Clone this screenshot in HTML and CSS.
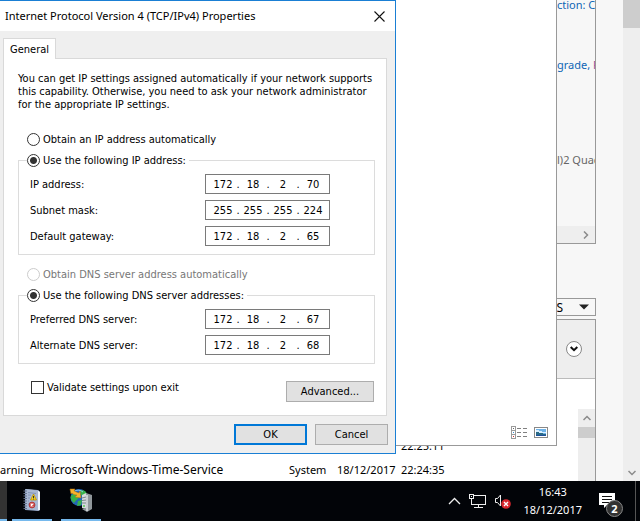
FILE: index.html
```html
<!DOCTYPE html>
<html lang="en">
<head>
<meta charset="utf-8">
<title>Internet Protocol Version 4 (TCP/IPv4) Properties</title>
<link rel="stylesheet" href="styles.css">
</head>
<body>
<main class="desktop">
  <section class="server" aria-label="Server Manager">
    <div class="server-content">
      <div class="panel summary">
        <div class="summary-values">
          <a href="#protection">ction: C</a>
          <a href="#feedback">grade, <span class="visited">P</span></a>
          <span class="plain">l)2 Quad</span>
        </div>
        <div class="hscroll">
          <svg width="6" height="8" viewBox="0 0 6 8"><path d="M1 0.5L4.5 4L1 7.5" fill="none" stroke="#8a8a8a" stroke-width="1.5"/></svg>
        </div>
      </div>
      <div class="tasks-row">
        <button class="tasks" type="button">S
          <svg width="10" height="6" viewBox="0 0 10 6"><path d="M0 0.5H10L5 5.5Z" fill="#222"/></svg>
        </button>
      </div>
      <div class="panel events">
        <div class="events-head">
          <button class="expand" type="button" aria-label="Expand">
            <svg width="8" height="6" viewBox="0 0 8 6"><path d="M0.7 1L4 4.2L7.3 1" fill="none" stroke="#111" stroke-width="2"/></svg>
          </button>
        </div>
        <div class="events-body">
          <table class="log">
            <tr><td></td><td></td><td></td><td class="date"></td><td class="time">22:25:11</td></tr>
            <tr><td>arning</td><td>Microsoft-Windows-Time-Service</td><td>System</td><td class="date">18/12/2017</td><td class="time">22:24:35</td></tr>
          </table>
          <div class="vscroll">
            <svg width="8" height="6" viewBox="0 0 8 6"><path d="M0.5 5L4 1.5L7.5 5" fill="none" stroke="#8a8a8a" stroke-width="1.5"/></svg>
            <div class="vthumb"></div>
          </div>
        </div>
      </div>
    </div>
    <div class="page-scroll">
      <div class="page-thumb"></div>
      <svg width="8" height="6" viewBox="0 0 8 6"><path d="M0.5 1L4 4.5L7.5 1" fill="none" stroke="#8a8a8a" stroke-width="1.5"/></svg>
    </div>
  </section>

  <section class="explorer" aria-label="Network Connections">
    <button class="view" type="button" aria-label="Details view">
      <svg width="16" height="13" viewBox="0 0 16 13" shape-rendering="crispEdges">
        <path d="M0.5 0.5H4.5V12.5H0.5ZM0.5 4.5H4.5M0.5 8.5H4.5" fill="none" stroke="#9a9a9a"/>
        <path d="M6 2.5H10M12 2.5H16M6 6.5H10M12 6.5H16M6 10.5H10M12 10.5H16" stroke="#808080"/>
        <path d="M2 2H3V3H2Z" fill="#666"/><path d="M2 6H3V7H2Z" fill="#3b8fd0"/><path d="M2 10H3V11H2Z" fill="#d03030"/>
      </svg>
    </button>
    <button class="view" type="button" aria-label="Large icons view">
      <svg width="14" height="11" viewBox="0 0 14 11" shape-rendering="crispEdges">
        <rect x="0.5" y="0.5" width="13" height="10" fill="#fff" stroke="#888"/>
        <rect x="2" y="2" width="10" height="7" fill="#6db2e8"/>
        <path d="M2 3H5V4H8V5H12V6H2Z" fill="#d8efff"/>
        <path d="M2 5H5V6H9V7H12V9H2Z" fill="#2b6a86"/><path d="M2 8H12V9H2Z" fill="#1c4f9c"/>
      </svg>
    </button>
  </section>

  <form class="dialog" aria-labelledby="dialog-title">
    <header class="titlebar">
      <h1 id="dialog-title">Internet Protocol Version 4 (TCP/IPv4) Properties</h1>
      <button class="close" type="button" aria-label="Close">
        <svg width="11" height="11" viewBox="0 0 11 11"><path d="M0.5 0.5L10.5 10.5M10.5 0.5L0.5 10.5" stroke="#111" stroke-width="1.1"/></svg>
      </button>
    </header>
    <div class="dialog-body">
      <button class="tab" type="button">General</button>
      <div class="page">
        <p class="intro">You can get IP settings assigned automatically if your network supports<br>this capability. Otherwise, you need to ask your network administrator<br>for the appropriate IP settings.</p>

        <label class="option"><input type="radio" name="ip">Obtain an IP address automatically</label>
        <fieldset class="group">
          <legend><label class="option"><input type="radio" name="ip" checked>Use the following IP address:</label></legend>
          <div class="field"><label for="ip1">IP address:</label>
            <div class="octets"><input id="ip1" value="172"><i>.</i><input aria-label="IP octet 2" value="18"><i>.</i><input aria-label="IP octet 3" value="2"><i>.</i><input aria-label="IP octet 4" value="70"></div></div>
          <div class="field"><label for="mask1">Subnet mask:</label>
            <div class="octets"><input id="mask1" value="255"><i>.</i><input aria-label="Mask octet 2" value="255"><i>.</i><input aria-label="Mask octet 3" value="255"><i>.</i><input aria-label="Mask octet 4" value="224"></div></div>
          <div class="field"><label for="gw1">Default gateway:</label>
            <div class="octets"><input id="gw1" value="172"><i>.</i><input aria-label="Gateway octet 2" value="18"><i>.</i><input aria-label="Gateway octet 3" value="2"><i>.</i><input aria-label="Gateway octet 4" value="65"></div></div>
        </fieldset>

        <label class="option disabled"><input type="radio" name="dns-auto" disabled>Obtain DNS server address automatically</label>
        <fieldset class="group">
          <legend><label class="option"><input type="radio" name="dns" checked>Use the following DNS server addresses:</label></legend>
          <div class="field"><label for="dns1">Preferred DNS server:</label>
            <div class="octets"><input id="dns1" value="172"><i>.</i><input aria-label="Preferred octet 2" value="18"><i>.</i><input aria-label="Preferred octet 3" value="2"><i>.</i><input aria-label="Preferred octet 4" value="67"></div></div>
          <div class="field"><label for="alt1">Alternate DNS server:</label>
            <div class="octets"><input id="alt1" value="172"><i>.</i><input aria-label="Alternate octet 2" value="18"><i>.</i><input aria-label="Alternate octet 3" value="2"><i>.</i><input aria-label="Alternate octet 4" value="68"></div></div>
        </fieldset>

        <div class="page-foot">
          <label class="validate"><input type="checkbox">Validate settings upon exit</label>
          <button class="btn advanced" type="button">Advanced...</button>
        </div>
      </div>
      <div class="actions">
        <button class="btn default" type="button">OK</button>
        <button class="btn" type="button">Cancel</button>
      </div>
    </div>
  </form>
</main>

<footer class="taskbar">
  <div class="apps">
    <button class="app edge" type="button" aria-label="Server Manager"></button>
    <button class="app" type="button" aria-label="Event Viewer">
      <svg width="18" height="24" viewBox="0 0 18 24">
        <path d="M2 1L15 2L17 4V22L15 23L2 22Z" fill="#8fa3c4"/>
        <path d="M3 1L15 2.5V22.5L3 21Z" fill="#a9b8d3"/>
        <path d="M15 2.5L17 4V22L15 22.5Z" fill="#eef3fa"/>
        <path d="M5 4.5L13 5.5M5 7L8 7.2M5 10H7M5 13H6M5 16H6" stroke="#8194b6"/>
        <path d="M0.5 3H4M0.5 5.5H4M0.5 8H4M0.5 10.5H4M0.5 13H4M0.5 15.5H4M0.5 18H4M0.5 20.5H4" stroke="#66738c"/>
        <path d="M10.500 6L13.500 12H7.500Z" fill="#f5d21f" stroke="#b88f08" stroke-width="0.8"/>
        <path d="M10.500 8V10M10.500 10.600V11.400" stroke="#333"/>
        <circle cx="9" cy="17" r="3" fill="#cf4444" stroke="#9d2929" stroke-width="0.6"/>
        <path d="M7.700 15.700L10.300 18.300M10.300 15.700L7.700 18.300" stroke="#fff" stroke-width="1.200"/>
      </svg>
    </button>
    <button class="app" type="button" aria-label="Network Connections">
      <svg width="24" height="24" viewBox="0 0 24 24">
        <circle cx="10" cy="9.500" r="8.500" fill="#2367b8"/>
        <path d="M2 8C4 5 8 6 10 8C10 11 7 12 5 15C3 13 1 11 2 8ZM11 3C14 1 17 3 18 6L15 9L12 7ZM9 13L13 12L12 17L8 18Z" fill="#38b24a"/>
        <path d="M3 5C6 2 10 1 14 4" fill="none" stroke="#9bdcff" stroke-width="0.8"/>
        <path d="M1 1L6 1L5 3C8 4 9 5 10 5L11 3L12 10L6 9L8 7C5 7 4 6 3 5L2 6Z" fill="#f7b22c" stroke="#b9730c" stroke-width="0.5"/>
        <path d="M13 7L17 5V21L13 20Z" fill="#d6dadc"/><path d="M17 5L23 7V21L18 24L13 21L17 20Z" fill="#90979b"/>
        <path d="M13 10L17 9M13 12.500L17 12M13 15H17" stroke="#7b868c"/><path d="M18 7V23" stroke="#dce1e3" stroke-width="1.500"/>
        <circle cx="15" cy="18" r="1" fill="#54c454"/>
      </svg>
    </button>
  </div>
  <div class="tray">
    <button class="tray-btn" type="button" aria-label="Show hidden icons">
      <svg width="13" height="8" viewBox="0 0 13 8"><path d="M1 7L6.500 1.500L12 7" fill="none" stroke="#eee" stroke-width="1.300"/></svg>
    </button>
    <button class="tray-btn" type="button" aria-label="Network">
      <svg width="17" height="14" viewBox="0 0 17 14" shape-rendering="crispEdges"><path d="M5 1.500H16.500V10.500H2.500V5M9.500 10.500V13M5 13.500H14M0.500 0.500H4.500V4.500H0.500Z" fill="none" stroke="#eee"/><path d="M2 2H3V3H2Z" fill="#eee"/></svg>
    </button>
    <button class="tray-btn" type="button" aria-label="Volume">
      <svg width="18" height="16" viewBox="0 0 18 16"><path d="M1.500 5.500H3.500L6.500 2V13L3.500 9.500H1.500Z" fill="none" stroke="#eee"/><circle cx="12" cy="11" r="4.800" fill="#d9262d"/><path d="M10 9L14 13M14 9L10 13" stroke="#fff" stroke-width="1.400"/></svg>
    </button>
    <div class="clock"><time>16:43</time><span>18/12/2017</span></div>
    <button class="action" type="button" aria-label="Notifications">
      <svg width="16" height="16" viewBox="0 0 16 16"><path d="M0 0H16V12H8L5 15V12H0Z" fill="#fff"/><path d="M3 3.500H13M3 6.500H13M3 9.500H10" stroke="#111"/></svg>
      <span class="badge">2</span>
    </button>
    <div class="show-desktop"></div>
  </div>
</footer>
</body>
</html>
```
FILE: styles.css
```css
* { box-sizing: border-box; }

body {
  margin: 0;
  height: 100vh;
  display: flex;
  flex-direction: column;
  overflow: hidden;
  font: 11px/13px "DejaVu Sans Condensed", "Liberation Sans", sans-serif;
  color: #000;
}

button, input { font: inherit; color: inherit; margin: 0; padding: 0; }
button { border: 0; background: none; }
svg { display: block; flex: none; }

.desktop { flex: 1; min-height: 0; position: relative; overflow: hidden; }

/* Server Manager window */
.server {
  position: absolute;
  inset: 0;
  display: flex;
  background: #f7f7f7;
  font-family: "Noto Sans", sans-serif;
  font-size: 12px;
}
.server-content { flex: 1; min-width: 0; margin-right: 27px; display: flex; flex-direction: column; }
.panel { border: 1px solid #999; border-left: 0; }
.summary { flex: none; height: 244px; border-top: 0; display: flex; flex-direction: column; align-items: flex-end; }
.summary-values {
  flex: 1;
  width: 38px;
  overflow: hidden;
  white-space: nowrap;
  display: flex;
  flex-direction: column;
  font-size: 11px;
}
.summary-values a { color: #0f66b5; text-decoration: none; height: 60px; line-height: 10px; flex: none; }
.summary-values .visited { color: #95519b; }
.summary-values .plain { color: #666; line-height: 80px; }
.hscroll { width: 100%; height: 17px; background: #eee; display: flex; align-items: center; justify-content: flex-end; padding-right: 6px; }
.tasks-row { display: flex; justify-content: flex-end; padding: 54px 0 3px; }
.tasks {
  width: 100px;
  height: 18px;
  border: 1px solid #999;
  display: flex;
  align-items: center;
  justify-content: flex-end;
  gap: 16px;
  padding-right: 6px;
}
.events { flex: 1; min-height: 0; border-bottom: 0; display: flex; flex-direction: column; }
.events-head { flex: none; height: 59px; background: #eee; border-bottom: 1px solid #bbb; display: flex; align-items: center; justify-content: flex-end; padding-right: 13px; }
.expand { width: 16px; height: 16px; border: 1px solid #888; border-radius: 50%; background: #fff; display: flex; align-items: center; justify-content: center; }
.events-body { flex: 1; min-height: 0; background: #fff; display: flex; align-items: flex-end; justify-content: space-between; }
.log { border-collapse: collapse; white-space: nowrap; font-size: 11px; }
.log td { height: 24px; padding: 0; }
.log td:nth-child(1) { min-width: 40px; }
.log td:nth-child(2) { min-width: 249px; font-size: 12px; }
.log td:nth-child(3) { min-width: 48px; }
.log .date { min-width: 64px; }
.vscroll { width: 17px; height: 72px; background: #eee; display: flex; flex-direction: column; align-items: center; gap: 6px; padding-top: 6px; }
.vthumb { width: 17px; height: 11px; background: #cdcdcd; }
.page-scroll { width: 17px; background: #eee; display: flex; flex-direction: column; align-items: center; justify-content: space-between; padding-bottom: 5px; }
.page-thumb { width: 17px; height: 28px; background: #cdcdcd; }

/* Network Connections window */
.explorer {
  position: absolute;
  top: 0;
  left: 0;
  width: 557px;
  height: 446px;
  background: #fff;
  border: 1px solid #999;
  border-width: 0 1px 1px 0;
  display: flex;
  align-items: flex-end;
  justify-content: flex-end;
  gap: 7px;
  padding: 0 8px 6px;
}
.view { display: flex; align-items: center; height: 13px; }

/* Properties dialog */
.dialog {
  position: absolute;
  top: 0;
  left: 0;
  width: 396px;
  background: #efefef;
  border: 1px solid #1a7fd4;
  border-left: 0;
}
.titlebar { height: 30px; background: #fff; display: flex; align-items: center; justify-content: space-between; padding: 0 10px 0 5px; }
.titlebar h1 { margin: 0; font: 11px/16px "Noto Sans", sans-serif; }
.dialog-body { padding: 7px 7px 8px 3px; }
.tab {
  position: relative;
  display: block;
  height: 21px;
  padding: 0 6px;
  margin-bottom: -1px;
  background: #fff;
  border: 1px solid #d9d9d9;
  border-bottom: 0;
}
.page { background: #fff; border: 1px solid #d9d9d9; margin-right: 1px; padding: 13px 11px 13px 14px; }
.intro { margin: 0 0 22px; white-space: nowrap; }
.option { display: flex; align-items: center; gap: 3px; height: 13px; }
.page > .option { margin-left: 9px; }
.disabled { color: #777; }
.option input {
  appearance: none;
  width: 13px;
  height: 13px;
  border: 1px solid #333;
  border-radius: 50%;
  background: #fff;
}
.option input:checked { background: radial-gradient(circle, #333 3px, #fff 4px); }
.option input:disabled { border-color: #ccc; }
.group { margin: 8px 0 13px; padding: 7px 44px 8px 11px; border: 1px solid #dcdcdc; min-width: 0; }
.group legend { margin-left: -3px; padding: 0 3px 0 0; }
.field { display: flex; align-items: center; justify-content: space-between; height: 20px; margin-bottom: 6px; }
.field:last-child { margin-bottom: 0; }
.octets { display: flex; align-items: center; width: 125px; height: 20px; border: 1px solid #7a7a7a; background: #fff; padding-left: 5px; }
.octets input { width: 24px; height: 16px; border: 0; background: none; text-align: center; outline: 0; }
.octets i { width: 6px; font-style: normal; text-align: center; }
.page-foot { display: flex; align-items: flex-start; justify-content: space-between; margin-top: 17px; padding: 0 1px 0 13px; }
.validate { display: flex; align-items: center; gap: 3px; height: 13px; }
.validate input { appearance: none; width: 13px; height: 13px; border: 1px solid #333; background: #fff; }
.btn { width: 73px; height: 21px; background: #e1e1e1; border: 1px solid #adadad; }
.advanced { width: 88px; }
.default { border: 2px solid #0078d7; }
.actions { display: flex; justify-content: flex-end; gap: 8px; padding-top: 8px; }

/* Taskbar */
.taskbar { flex: none; height: 40px; background: #020408; color: #fff; display: flex; justify-content: space-between; font: 11px/18px "Noto Sans", sans-serif; }
.apps { display: flex; gap: 9px; }
.app { width: 40px; display: flex; align-items: center; justify-content: center; border-bottom: 2px solid #76b9ed; }
.edge { width: 7px; margin-right: -4px; background: #333; }
.tray { display: flex; align-items: center; }
.tray-btn { margin-right: 8px; }
.clock { display: flex; flex-direction: column; align-items: center; margin: 0 17px 0 3px; }
.action { position: relative; width: 16px; height: 16px; margin-right: 20px; }
.badge {
  position: absolute;
  left: 7px;
  top: 7px;
  width: 17px;
  height: 17px;
  border: 1px solid #888;
  border-radius: 50%;
  background: #333;
  font-weight: bold;
  line-height: 15px;
}
.show-desktop { width: 5px; height: 100%; border-left: 1px solid #555; }
```
